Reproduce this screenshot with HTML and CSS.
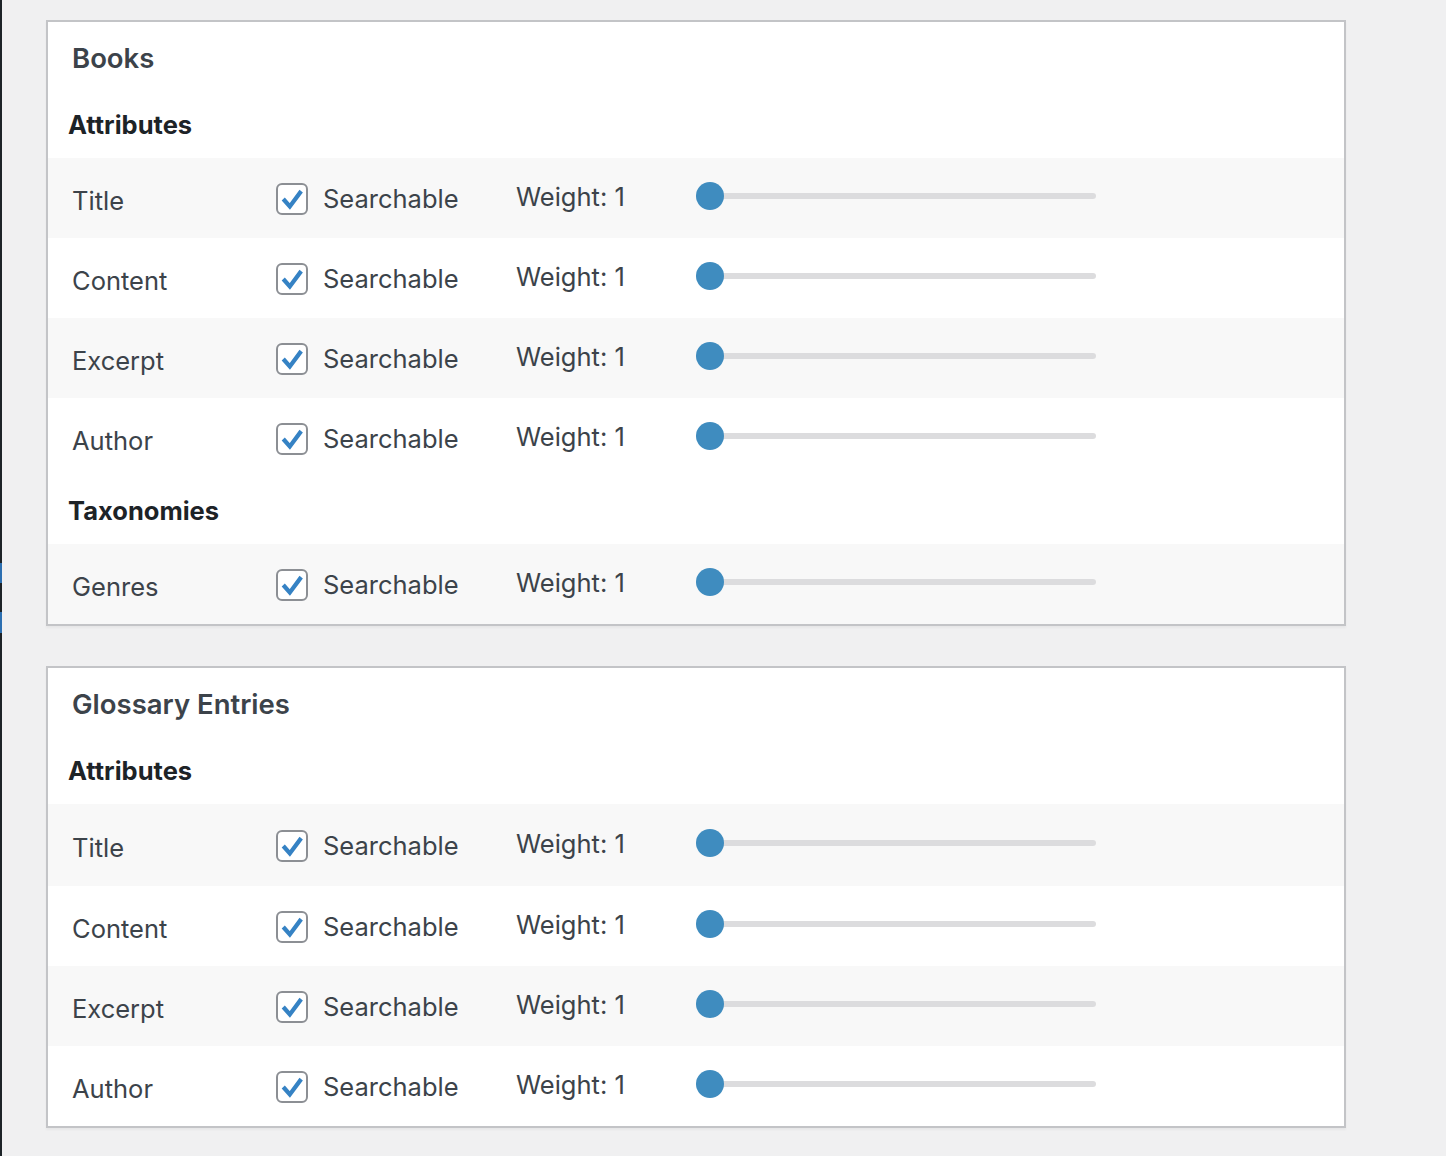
FILE: index.html
```html
<!DOCTYPE html>
<html lang="en">
<head>
<meta charset="utf-8">
<title>Search weighting</title>
<link rel="stylesheet" href="styles.css">
</head>
<body>
<div class="admin-edge">
  <span class="edge-dark edge-top"></span>
  <span class="edge-blue"></span>
  <span class="edge-dark edge-mid"></span>
  <span class="edge-blue edge-blue2"></span>
  <span class="edge-dark edge-rest"></span>
</div>
<main class="content">
  <section class="postbox">
    <h2 class="postbox-title">Books</h2>
    <h3 class="group-title">Attributes</h3>
    <div class="field-row striped">
      <span class="field-label">Title</span>
      <label class="check"><span class="box"><svg viewBox="0 0 32 32" width="28" height="28"><path d="M6 16 L13.5 24.5 L26.5 7" fill="none" stroke="#3582c4" stroke-width="4.8"/></svg></span><span class="check-text">Searchable</span></label>
      <span class="weight">Weight: 1</span>
      <input class="range" type="range" min="1" max="100" value="1">
    </div>
    <div class="field-row">
      <span class="field-label">Content</span>
      <label class="check"><span class="box"><svg viewBox="0 0 32 32" width="28" height="28"><path d="M6 16 L13.5 24.5 L26.5 7" fill="none" stroke="#3582c4" stroke-width="4.8"/></svg></span><span class="check-text">Searchable</span></label>
      <span class="weight">Weight: 1</span>
      <input class="range" type="range" min="1" max="100" value="1">
    </div>
    <div class="field-row striped">
      <span class="field-label">Excerpt</span>
      <label class="check"><span class="box"><svg viewBox="0 0 32 32" width="28" height="28"><path d="M6 16 L13.5 24.5 L26.5 7" fill="none" stroke="#3582c4" stroke-width="4.8"/></svg></span><span class="check-text">Searchable</span></label>
      <span class="weight">Weight: 1</span>
      <input class="range" type="range" min="1" max="100" value="1">
    </div>
    <div class="field-row">
      <span class="field-label">Author</span>
      <label class="check"><span class="box"><svg viewBox="0 0 32 32" width="28" height="28"><path d="M6 16 L13.5 24.5 L26.5 7" fill="none" stroke="#3582c4" stroke-width="4.8"/></svg></span><span class="check-text">Searchable</span></label>
      <span class="weight">Weight: 1</span>
      <input class="range" type="range" min="1" max="100" value="1">
    </div>
    <h3 class="group-title">Taxonomies</h3>
    <div class="field-row striped">
      <span class="field-label">Genres</span>
      <label class="check"><span class="box"><svg viewBox="0 0 32 32" width="28" height="28"><path d="M6 16 L13.5 24.5 L26.5 7" fill="none" stroke="#3582c4" stroke-width="4.8"/></svg></span><span class="check-text">Searchable</span></label>
      <span class="weight">Weight: 1</span>
      <input class="range" type="range" min="1" max="100" value="1">
    </div>
  </section>

  <section class="postbox">
    <h2 class="postbox-title">Glossary Entries</h2>
    <h3 class="group-title">Attributes</h3>
    <div class="field-row striped first-row">
      <span class="field-label">Title</span>
      <label class="check"><span class="box"><svg viewBox="0 0 32 32" width="28" height="28"><path d="M6 16 L13.5 24.5 L26.5 7" fill="none" stroke="#3582c4" stroke-width="4.8"/></svg></span><span class="check-text">Searchable</span></label>
      <span class="weight">Weight: 1</span>
      <input class="range" type="range" min="1" max="100" value="1">
    </div>
    <div class="field-row">
      <span class="field-label">Content</span>
      <label class="check"><span class="box"><svg viewBox="0 0 32 32" width="28" height="28"><path d="M6 16 L13.5 24.5 L26.5 7" fill="none" stroke="#3582c4" stroke-width="4.8"/></svg></span><span class="check-text">Searchable</span></label>
      <span class="weight">Weight: 1</span>
      <input class="range" type="range" min="1" max="100" value="1">
    </div>
    <div class="field-row striped">
      <span class="field-label">Excerpt</span>
      <label class="check"><span class="box"><svg viewBox="0 0 32 32" width="28" height="28"><path d="M6 16 L13.5 24.5 L26.5 7" fill="none" stroke="#3582c4" stroke-width="4.8"/></svg></span><span class="check-text">Searchable</span></label>
      <span class="weight">Weight: 1</span>
      <input class="range" type="range" min="1" max="100" value="1">
    </div>
    <div class="field-row">
      <span class="field-label">Author</span>
      <label class="check"><span class="box"><svg viewBox="0 0 32 32" width="28" height="28"><path d="M6 16 L13.5 24.5 L26.5 7" fill="none" stroke="#3582c4" stroke-width="4.8"/></svg></span><span class="check-text">Searchable</span></label>
      <span class="weight">Weight: 1</span>
      <input class="range" type="range" min="1" max="100" value="1">
    </div>
  </section>
</main>
</body>
</html>
```
FILE: styles.css
```css
html, body {
  margin: 0;
  padding: 0;
}
body {
  background: #f0f0f1;
  font-family: Inter, "Noto Sans", "Liberation Sans", sans-serif;
  color: #3c434a;
  display: flex;
  min-height: 1156px;
}
.admin-edge {
  width: 2px;
  flex: none;
  display: flex;
  flex-direction: column;
}
.edge-dark { background: #1d2327; }
.edge-top { height: 563px; }
.edge-blue { background: #2c6fb1; height: 20px; }
.edge-mid { height: 29px; }
.edge-blue2 { height: 21px; }
.edge-rest { flex: 1; }

.content {
  padding: 20px 0 0 44px;
  width: 1300px;
}
.postbox {
  background: #fff;
  border: 2px solid #c3c4c7;
  box-shadow: 0 2px 2px rgba(0,0,0,0.04);
  margin-bottom: 40px;
}
.postbox-title {
  margin: 0;
  padding: 16px 24px 14px;
  font-size: 27.5px;
  line-height: 40px;
  font-weight: 600;
  color: #3c434a;
}
.group-title {
  margin: 0;
  padding: 15px 20px;
  font-size: 25.5px;
  line-height: 36px;
  font-weight: 700;
  color: #1d2327;
}
.field-row {
  display: grid;
  grid-template-columns: 204px 240px 180px 400px;
  align-items: center;
  height: 80px;
  padding-left: 24px;
  font-size: 25.5px;
  color: #3c434a;
}
.field-row.first-row {
  height: 82px;
}
.field-row.striped {
  background: #f8f8f8;
}
.field-label {
  padding-top: 4px;
}
.check {
  display: flex;
  align-items: center;
  gap: 15px;
  padding-top: 1px;
}
.check-text {
  padding-bottom: 1px;
}
.box {
  width: 32px;
  height: 32px;
  box-sizing: border-box;
  border: 2px solid #8c8f94;
  border-radius: 6px;
  background: #fff;
  display: flex;
  align-items: center;
  justify-content: center;
}
.weight {
  padding-bottom: 4px;
}
.range {
  -webkit-appearance: none;
  appearance: none;
  width: 400px;
  height: 28px;
  margin: 0 0 4px;
  background: transparent;
}
.range::-webkit-slider-runnable-track {
  height: 6px;
  background: #dcdcde;
  border-radius: 3px;
}
.range::-webkit-slider-thumb {
  -webkit-appearance: none;
  width: 28px;
  height: 28px;
  border-radius: 50%;
  background: #3f8cbf;
  border: none;
  margin-top: -11px;
}
```
